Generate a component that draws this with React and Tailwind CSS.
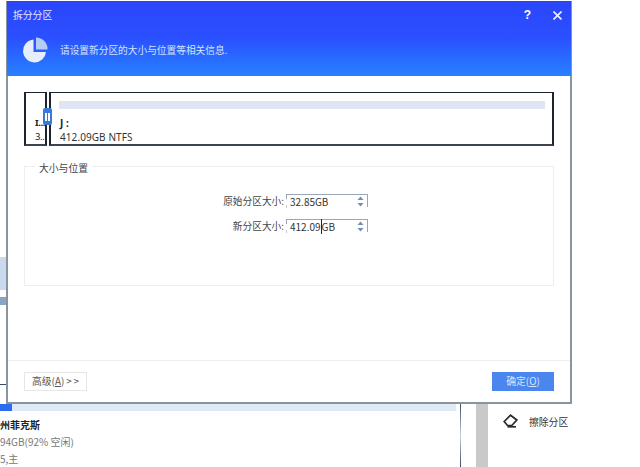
import { Fragment } from 'react';

const font = 'font-["Noto_Sans_CJK_SC","Noto_Sans",sans-serif]';

function PieIcon() {
  return (
    <svg width="26" height="26" viewBox="0 0 26 26" className="shrink-0">
      <path d="M11.5 2.5 A11.5 11.5 0 1 0 24 15 H11.5 Z" fill="#e6eefb" />
      <path d="M14 0.5 A11.5 11.5 0 0 1 25.5 12.5 H14 Z" fill="#b5cdf5" />
    </svg>
  );
}

function EraserIcon() {
  return (
    <svg width="15" height="14" viewBox="0 0 15 14" fill="none" stroke="#2a2a2a" strokeWidth="1.7" className="shrink-0">
      <path d="M1.2 7.5 L7.5 1.2 L13.8 6 L8.8 11.5 H4.5 Z" />
      <path d="M4.5 12.8 H13" />
    </svg>
  );
}

function Spin({ value, caret }) {
  return (
    <div className="relative w-[82px] h-[14px] border-t border-[#9aa6b8] text-[10px] leading-[14px] text-[#333] pl-[4px] flex items-center">
      <span className="absolute left-0 top-0 h-[4px] w-px bg-[#9aa6b8]" />
      <span className="absolute right-0 top-0 h-[12px] w-px bg-[#9aa6b8]" />
      <span className="absolute left-0 bottom-0 h-[3px] w-px bg-[#c5ccd6]" />
      {caret ? (
        <span>
          {value.slice(0, 6)}
          <span className="border-l border-[#223]" />
          {value.slice(6)}
        </span>
      ) : (
        <span>{value}</span>
      )}
      <svg width="7" height="11" viewBox="0 0 7 11" className="absolute right-[4px] top-[1px]" fill="#6f8fb5">
        <path d="M3.5 0.5 L6.5 4 H0.5 Z" />
        <path d="M3.5 10.5 L0.5 7 H6.5 Z" />
      </svg>
    </div>
  );
}

function SizeRow({ label, value, caret }) {
  return (
    <Fragment>
      <span className="text-right text-[9.7px] leading-[14px] text-[#444]">{label}</span>
      <Spin value={value} caret={caret} />
    </Fragment>
  );
}

export default function App() {
  return (
    <div className={`relative w-[640px] h-[467px] overflow-hidden bg-white ${font}`}>
      {/* stuff behind the dialog */}
      <div className="flex flex-col h-full">
        <div className="h-[257px] shrink-0" />
        <div className="h-[33px] w-[7px] bg-[#c9d9ee] shrink-0" />
        <div className="h-[7px] w-[7px] bg-white shrink-0" />
        <div className="h-[8px] w-[7px] bg-[#8aa4c9] shrink-0" />
        <div className="h-[79px] shrink-0" />
        <div className="h-px w-[7px] bg-[#3b4a63] shrink-0" />
        <div className="h-[19px] shrink-0" />
        <div className="flex h-[7px] shrink-0">
          <div className="w-[12px] bg-[#2a6df0]" />
          <div className="w-[444px] bg-[#dfe9f7]" />
        </div>
        <div className="flex flex-1">
          <div className="w-[460px] flex flex-col pt-[5px] text-[10px] leading-[17px] text-[#777]">
            <div className="font-bold text-[10px] text-[#222]">州菲克斯</div>
            <div className="whitespace-nowrap">94GB(92% 空闲)</div>
            <div>5,主</div>
          </div>
          <div className="w-px -mt-[7px] bg-gradient-to-b from-[#3b4a63] via-[#c9d3e2] to-[#3b4a63]" />
          <div className="w-[15px]" />
          <div className="w-[12px] bg-[#c9c9c9] -mt-[7px]" />
          <div className="flex items-start gap-[11px] pl-[15px] pt-[3px] text-[9.8px] leading-[16px] text-[#333]">
            <EraserIcon />
            <span className="whitespace-nowrap">擦除分区</span>
          </div>
        </div>
      </div>

      {/* dialog */}
      <div className="absolute left-[6px] top-[1px] w-[566px] h-[403px] flex flex-col bg-white border-l-2 border-r-2 border-b-2 border-[#8a949e]">
        <div className="h-[75px] shrink-0 -mx-[1px] flex flex-col border-t border-[#2b4bb8] bg-gradient-to-b from-[#2b46fb] via-[#2b50ff] to-[#2a80ff] text-white">
          <div className="flex items-center h-[26px] pl-[6px] pr-[9px] text-[9.8px]">
            <span className="text-[#e2e9ff]">拆分分区</span>
            <span className="ml-auto text-[12px] font-bold font-['Liberation_Sans',sans-serif]">?</span>
            <svg width="9" height="9" viewBox="0 0 9 9" className="ml-[22px]" stroke="#eef3ff" strokeWidth="1.6">
              <path d="M0.5 0.5 L8.5 8.5 M8.5 0.5 L0.5 8.5" />
            </svg>
          </div>
          <div className="flex items-center pl-[15px] gap-[12px] mt-[9px]">
            <PieIcon />
            <span className="text-[9.7px] text-[#d5e2fb]">请设置新分区的大小与位置等相关信息.</span>
          </div>
        </div>

        <div className="flex-1 flex flex-col px-[16px] pt-[16px]">
          <div className="flex gap-[2px] h-[54px] text-[10px] leading-[14px] text-[#222] font-['Noto_Sans',sans-serif]">
            <div className="relative w-[23px] border-x-2 border-t border-b-2 border-[#1d2430] border-b-[#3c4450] pl-[9px] pt-[23px] whitespace-nowrap text-[9.5px] tracking-[-0.4px]">
              <div className="font-bold">I...</div>
              <div>3..</div>
              <div className="absolute -right-[7px] top-[15px] w-[9px] h-[17px] rounded-[2px] bg-[#3b78dc] flex items-center justify-center gap-px">
                <span className="w-[2px] h-[8px] bg-white" />
                <span className="w-[2px] h-[8px] bg-white" />
              </div>
            </div>
            <div className="flex-1 border-x-2 border-t border-b-2 border-[#1d2430] border-b-[#3c4450] pl-[8px] pr-[7px] pt-[8px]">
              <div className="h-[8px] bg-[#dfe6f1]" />
              <div className="mt-[7px] ml-px font-bold">J :</div>
              <div className="ml-px tracking-[0.08px] text-[#333]">412.09GB NTFS</div>
            </div>
          </div>

          <div className="relative mt-[20px] h-[120px] border border-[#eeeeee]">
            <span className="absolute left-[10px] -top-[6px] bg-white px-[4px] text-[9.8px] leading-[14px] text-[#444]">大小与位置</span>
            <div className="grid grid-cols-[1fr_82px] w-[343px] items-start gap-x-[2px] gap-y-[11px] pt-[27px]">
              <SizeRow label="原始分区大小:" value="32.85GB" />
              <SizeRow label="新分区大小:" value="412.09GB" caret />
            </div>
          </div>

          <div className="mt-[74px] -mx-[16px] border-t border-[#eeeeee] flex items-center justify-between px-[16px] h-[42px] -mb-px">
            <button className="w-[63px] h-[19px] border border-[#e6e6e6] pl-[7px] text-left text-[9.8px] text-[#555] leading-none whitespace-nowrap">
              高级(<span className="underline">A</span>)<span className="ml-[2px] tracking-[2px]">&gt;&gt;</span>
            </button>
            <button className="w-[62px] h-[19px] bg-[#4a86ee] text-[9.8px] text-[#d8e6fb] leading-none">
              确定(<span className="underline">O</span>)
            </button>
          </div>
        </div>
      </div>
    </div>
  );
}
